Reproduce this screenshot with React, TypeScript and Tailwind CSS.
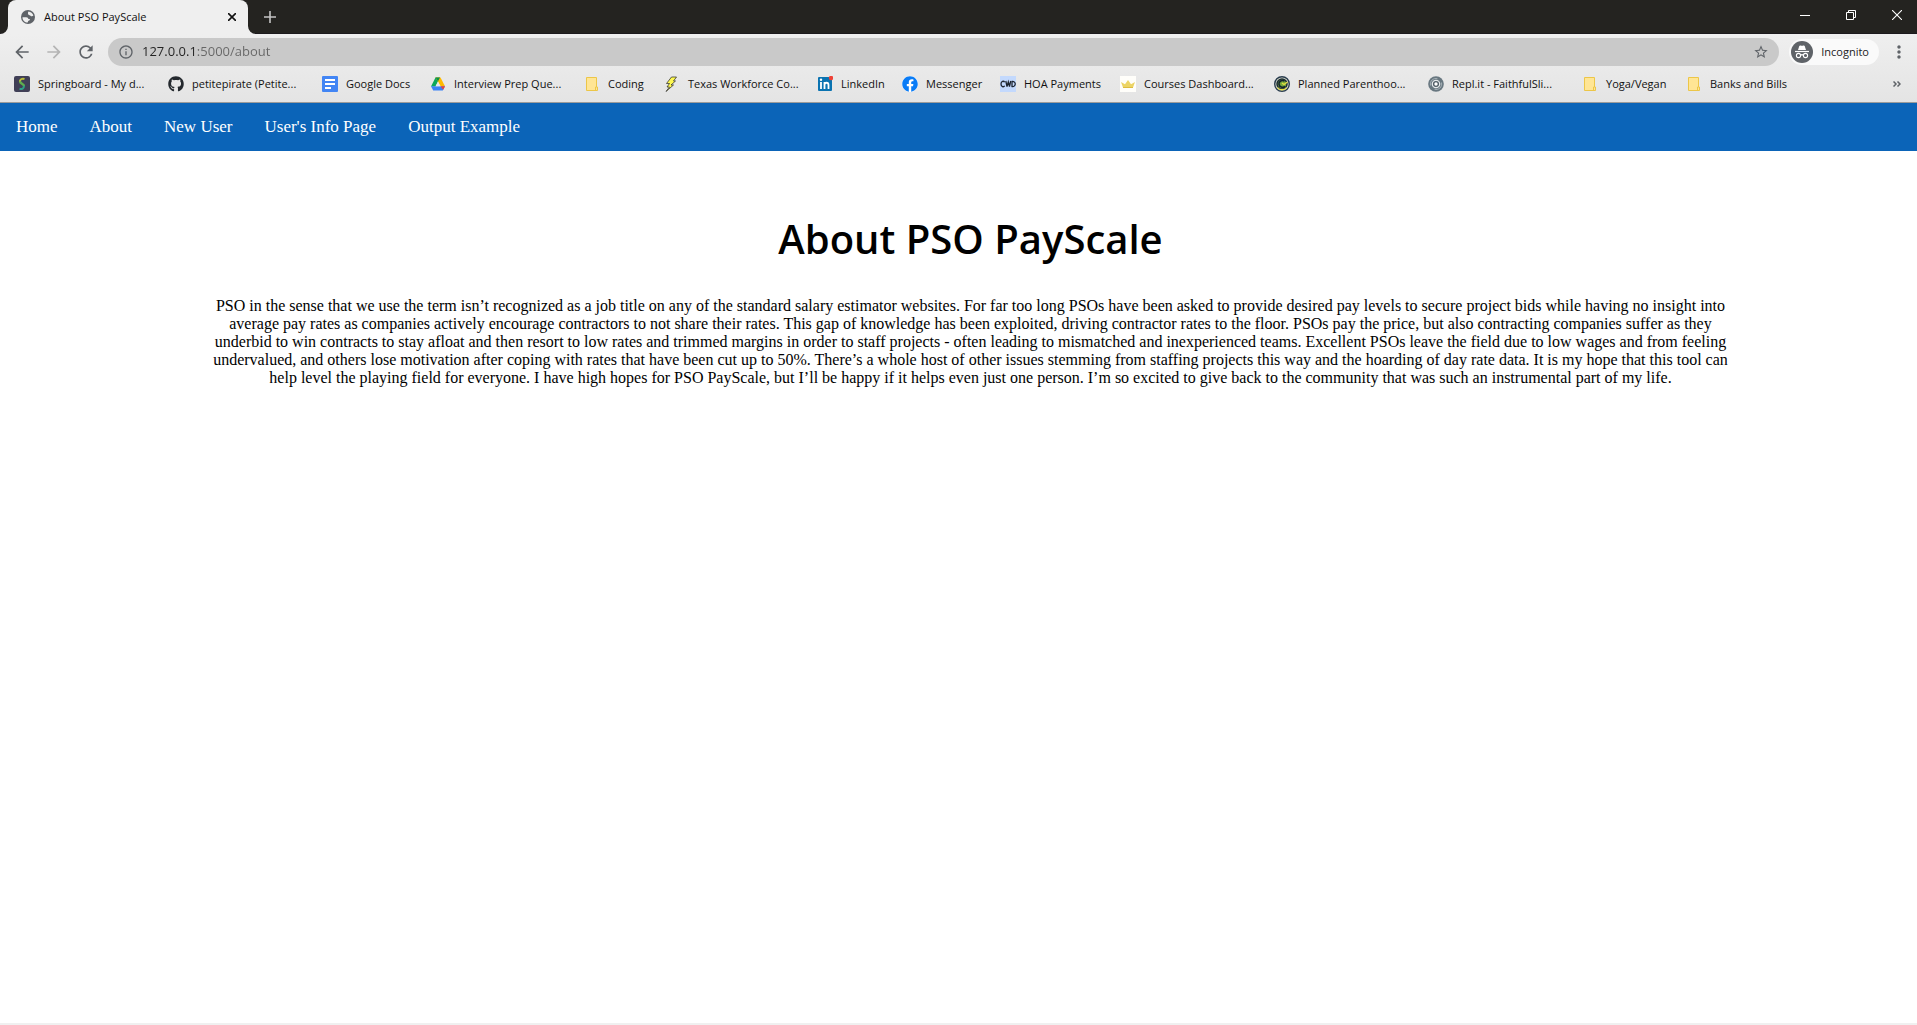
import type { ReactNode } from "react";
import { FaFacebook, FaGithub } from "react-icons/fa";
import {
  MdArrowBack,
  MdArrowForward,
  MdInfoOutline,
  MdMoreVert,
  MdRefresh,
  MdStarBorder,
} from "react-icons/md";

const GlobeIcon = () => (
  <svg viewBox="0 0 16 16" className="size-4">
    <circle cx="8" cy="8" r="7" fill="#5f6368" />
    <path d="M8.500 2.600c2.200.2 4.200 1.800 4.900 4-.8.900-2.200.9-2.900.1-.4-.5-1.300-.2-2-.9-.7-.8-.7-2.200 0-3.200z" fill="#efefef" />
    <path
      d="M2.500 8.200h3.800c1.300 0 2 .8 2 1.700h1.500c.3 1.200-.5 1.700-1.500 1.800l-.6 1.800C4.800 13.500 2.300 11.200 2.500 8.200z"
      fill="#efefef"
    />
  </svg>
);

const FolderIcon = () => (
  <svg viewBox="0 0 16 16" className="size-4">
    <path d="M2.500 1.500h10v9.500h1v3.500h-11z" fill="#ffe594" stroke="#ecc648" />
    <path d="M11.500 14.500v-3.500h1" fill="none" stroke="#ecc648" />
  </svg>
);

const SpringboardIcon = () => (
  <svg viewBox="0 0 16 16" className="size-4">
    <rect width="16" height="16" rx="2" fill="#403f56" />
    <path d="M10.500 3C8 2.200 5.500 3.500 6 6" fill="none" stroke="#b9bd3c" strokeWidth="2" />
    <path d="M6 5.500C6.300 8 10 7.500 10 10.200" fill="none" stroke="#5fae4e" strokeWidth="2.400" />
    <path d="M10 9.800C10 12.600 8 13.500 5.500 12.800" fill="none" stroke="#2f9f86" strokeWidth="2" />
  </svg>
);

const DocsIcon = () => (
  <svg viewBox="0 0 16 16" className="size-4">
    <rect width="16" height="16" rx="1" fill="#4285f4" />
    <path d="M3 4h10M3 8h10M3 12h6" stroke="#fff" strokeWidth="2" />
  </svg>
);

const DriveIcon = () => (
  <svg viewBox="0 0 16 16" className="size-4">
    <path d="M5.500 1.500h4.500L5.500 10.500H1z" fill="#0da75a" />
    <path d="M5.500 1.500h5l4.500 8.700h-4.500z" fill="#ffba00" />
    <path d="M5.500 1.500h4.500L8 5.500z" fill="#0a8f4c" />
    <path d="M1 10.200h14L12.800 14.500H3.200z" fill="#3b82f6" />
    <path d="M10.500 10.200h4.500l-1.800 3.500z" fill="#e8453c" />
    <path d="M8 5.500L10.500 10.200h-5z" fill="#e8e8e8" />
  </svg>
);

const BoltIcon = () => (
  <svg viewBox="0 0 16 16" className="size-4">
    <path
      d="M7.500 1L2.500 7.500h3L3 11h2.500L2 15.500 9.500 9H7l4.500-4H9.500L12.500 1z"
      fill="#fdf851"
      stroke="#222"
      strokeWidth="0.700"
    />
  </svg>
);

const LinkedInIcon = () => (
  <svg viewBox="0 0 16 16" className="size-4">
    <rect x="1" y="1" width="14" height="14" rx="1" fill="#0a73b1" />
    <path d="M4 6v7M7.500 6v7M7.500 13V9c0-3 4-3 4 0v4" fill="none" stroke="#fff" strokeWidth="1.800" />
    <circle cx="4" cy="3.800" r="1.200" fill="#fff" />
    <circle cx="14" cy="2" r="2.200" fill="#ee4237" />
  </svg>
);

const MessengerIcon = () => (
  <span className="flex size-4 items-center justify-center rounded-full bg-white">
    <FaFacebook className="size-4 text-[#0a7cf6]" />
  </span>
);

const CwdIcon = () => (
  <svg viewBox="0 0 16 16" className="size-4">
    <rect width="16" height="16" fill="#c3d9fd" />
    <g fill="none" stroke="#1d2430" strokeWidth="1.300">
      <path d="M4.600 6.300C3.800 4.600 1 5 1 8s2.800 3.400 3.600 1.700" />
      <path d="M5.800 5l1.200 5.500L8.300 6l1.200 4.500L10.700 5" />
      <path d="M12 5.500v5c4.300.5 4.300-5.500 0-5z" />
    </g>
  </svg>
);

const CrownIcon = () => (
  <svg viewBox="0 0 16 16" className="size-4">
    <rect width="16" height="16" fill="#fffefa" />
    <path d="M1 6l4 2.300L8 4 11 8.300 15 6l-2 5.500H3z" fill="#ecd465" />
    <path d="M3 11.500h10" stroke="#dcbc3f" />
  </svg>
);

const PlannedIcon = () => (
  <svg viewBox="0 0 16 16" className="size-4">
    <circle cx="8" cy="8" r="7.300" fill="#d9dccb" stroke="#2a3d4f" strokeWidth="1.400" />
    <circle cx="8" cy="8" r="5" fill="#76a83c" stroke="#1c2b36" strokeWidth="1.500" />
    <path d="M10.500 5C7 3.500 4.500 6 5 8.500s3.500 3.500 6 2" fill="none" stroke="#13232e" strokeWidth="1.600" />
    <path d="M8 7l2 1.500L13.500 6" fill="none" stroke="#e7df43" strokeWidth="1.400" />
    <path d="M3.500 11.500c2 3 7 3 9 0" fill="none" stroke="#e7df43" strokeWidth="1.300" />
  </svg>
);

const ReplIcon = () => (
  <svg viewBox="0 0 16 16" className="size-4">
    <circle cx="8" cy="8" r="7.800" fill="#687780" />
    <circle cx="8" cy="8" r="3.700" fill="#4f5d66" stroke="#e3e7e9" strokeWidth="1.300" />
    <circle cx="8" cy="8" r="1.700" fill="#fff" />
    <path
      d="M2.500 9.500C1.500 5 5.500 1.500 9.500 2.800M13.500 6.500C14.500 11 10.500 14.500 6.500 13.200"
      fill="none"
      stroke="#aeb8bd"
      strokeWidth="0.900"
    />
  </svg>
);

const IncognitoIcon = () => (
  <svg viewBox="0 0 22 22" className="size-[22px]">
    <circle cx="11" cy="11" r="11" fill="#5f6368" />
    <path d="M7 9L8.300 5c.2-.6.800-.7 1.400-.5.800.3 1.800.3 2.600 0 .6-.2 1.200-.1 1.400.5L15 9z" fill="#fff" />
    <path d="M4 10.500h14" stroke="#fff" strokeWidth="1.200" />
    <g fill="none" stroke="#fff" strokeWidth="1.100">
      <circle cx="7.500" cy="14.500" r="2.100" />
      <circle cx="14.500" cy="14.500" r="2.100" />
      <path d="M9.600 14.300c.8-.7 2-.7 2.800 0" />
    </g>
  </svg>
);

type Bookmark = { label: string; icon: ReactNode; width: string };

const bookmarks: Bookmark[] = [
  { label: "Springboard - My d...", icon: <SpringboardIcon />, width: "w-[154px]" },
  { label: "petitepirate (Petite...", icon: <FaGithub className="size-4 text-[#24292e]" />, width: "w-[154px]" },
  { label: "Google Docs", icon: <DocsIcon />, width: "w-[108px]" },
  { label: "Interview Prep Que...", icon: <DriveIcon />, width: "w-[154px]" },
  { label: "Coding", icon: <FolderIcon />, width: "w-20" },
  { label: "Texas Workforce Co...", icon: <BoltIcon />, width: "w-[153px]" },
  { label: "LinkedIn", icon: <LinkedInIcon />, width: "w-[85px]" },
  { label: "Messenger", icon: <MessengerIcon />, width: "w-[98px]" },
  { label: "HOA Payments", icon: <CwdIcon />, width: "w-[120px]" },
  { label: "Courses Dashboard...", icon: <CrownIcon />, width: "w-[154px]" },
  { label: "Planned Parenthoo...", icon: <PlannedIcon />, width: "w-[154px]" },
  { label: "Repl.it - FaithfulSli...", icon: <ReplIcon />, width: "w-[154px]" },
  { label: "Yoga/Vegan", icon: <FolderIcon />, width: "w-[104px]" },
  { label: "Banks and Bills", icon: <FolderIcon />, width: "w-[104px]" },
];

const links = ["Home", "About", "New User", "User's Info Page", "Output Example"];

const TabStrip = () => (
  <div className="flex h-[34px] items-end border-b border-[#1c1a1d] bg-[#242320] pl-2">
    <div className="relative -mb-px flex h-[34px] w-60 items-center rounded-t-lg bg-[#efefef] pr-3 pl-3">
      <svg viewBox="0 0 8 8" className="absolute bottom-0 -left-2 size-2">
        <path d="M8 0v8H0a8 8 0 0 0 8-8z" fill="#efefef" />
      </svg>
      <svg viewBox="0 0 8 8" className="absolute -right-2 bottom-0 size-2">
        <path d="M0 0v8h8a8 8 0 0 1-8-8z" fill="#efefef" />
      </svg>
      <GlobeIcon />
      <span className="ml-2 flex-1 text-[11px] whitespace-nowrap text-[#111]">About PSO PayScale</span>
      <button type="button" aria-label="Close tab">
        <svg viewBox="0 0 8 8" className="size-2" stroke="#111" strokeWidth="1.600">
          <path d="M0 0l8 8M8 0L0 8" />
        </svg>
      </button>
    </div>
    <button type="button" aria-label="New tab" className="ml-4 self-center">
      <svg viewBox="0 0 12 12" className="size-3" stroke="#c4c4c4" strokeWidth="1.600">
        <path d="M6 0v12M0 6h12" />
      </svg>
    </button>
    <div className="mr-[15px] ml-auto flex items-center gap-9 self-center pb-1">
      <button type="button" aria-label="Minimize">
        <svg viewBox="0 0 10 10" className="size-[10px]" stroke="#fff">
          <path d="M0 5.500h10" />
        </svg>
      </button>
      <button type="button" aria-label="Restore">
        <svg viewBox="0 0 10 10" className="size-[10px]" fill="none" stroke="#fff">
          <path d="M.5 2.500h7v7h-7zM2.500 2.500v-2h7v7h-2" />
        </svg>
      </button>
      <button type="button" aria-label="Close">
        <svg viewBox="0 0 10 10" className="size-[10px]" stroke="#fff" strokeWidth="1.100">
          <path d="M0 0l10 10M10 0L0 10" />
        </svg>
      </button>
    </div>
  </div>
);

const Toolbar = () => (
  <div className="flex h-9 items-center pr-2 pl-3 text-[#5f6368]">
    <button type="button" aria-label="Back">
      <MdArrowBack className="size-5" />
    </button>
    <button type="button" aria-label="Forward" className="ml-3 text-[#b4b4b4]">
      <MdArrowForward className="size-5" />
    </button>
    <button type="button" aria-label="Reload" className="ml-3">
      <MdRefresh className="size-5" />
    </button>
    <div className="ml-3 flex h-7 flex-1 items-center rounded-full bg-[#c9c9c9] px-[10px]">
      <MdInfoOutline className="size-4" />
      <input
        type="text"
        aria-label="Address"
        defaultValue="127.0.0.1:5000/about"
        className="ml-2 flex-1 bg-linear-to-r from-[#222] from-[54px] to-[#666] to-[54px] bg-clip-text text-[13px] text-transparent outline-none"
      />
      <button type="button" aria-label="Bookmark this page">
        <MdStarBorder className="size-4" />
      </button>
    </div>
    <button
      type="button"
      className="ml-[10px] flex h-[26px] items-center rounded-full bg-[#fafafa] pr-[10px] pl-[2px] text-[11px] text-[#222]"
    >
      <IncognitoIcon />
      <span className="ml-2">Incognito</span>
    </button>
    <button type="button" aria-label="Menu" className="ml-[10px]">
      <MdMoreVert className="size-5" />
    </button>
  </div>
);

const BookmarksBar = () => (
  <div className="flex h-[33px] items-center border-b border-[#9b9b9b] pr-4 pb-[4px] pl-[14px] text-[11px] text-[#111]">
    {bookmarks.map((bookmark) => (
      <a key={bookmark.label} href="#" className={`flex shrink-0 items-center gap-2 ${bookmark.width}`}>
        {bookmark.icon}
        <span className="whitespace-nowrap">{bookmark.label}</span>
      </a>
    ))}
    <button type="button" aria-label="More bookmarks" className="ml-auto">
      <svg viewBox="0 0 8 6" className="h-[6px] w-2" fill="none" stroke="#5f6368" strokeWidth="1.500">
        <path d="M.5.5L3 3 .5 5.500M4.500.5L7 3 4.500 5.500" />
      </svg>
    </button>
  </div>
);

const App = () => {
  return (
    <div className="flex min-h-screen flex-col border-b-2 border-[#f0f0f0] bg-white">
      <header className="font-['Open_Sans',sans-serif]">
        <TabStrip />
        <div className="bg-linear-to-b from-[#efefef] to-[#e4e4e4]">
          <Toolbar />
          <BookmarksBar />
        </div>
      </header>

      <nav className="flex h-12 items-center gap-8 bg-[#0b64b8] px-4 font-['Liberation_Serif',serif] text-[17px] text-white">
        {links.map((link) => (
          <a key={link} href="#">
            {link}
          </a>
        ))}
      </nav>

      <main className="flex-1 pt-15 pl-6 text-center text-black">
        <div className="mx-auto w-[81%]">
          <h1 className="font-['Comic_Sans_MS','Open_Sans',sans-serif] text-[40px] leading-[56px] font-semibold">
            About PSO PayScale
          </h1>
          <p className="mt-[30px] font-['Liberation_Serif',serif] text-base leading-[18px]">
            PSO in the sense that we use the term isn’t recognized as a job title on any of the standard salary
            estimator websites. For far too long PSOs have been asked to provide desired pay levels to secure project
            bids while having no insight into average pay rates as companies actively encourage contractors to not
            share their rates. This gap of knowledge has been exploited, driving contractor rates to the floor. PSOs
            pay the price, but also contracting companies suffer as they underbid to win contracts to stay afloat and
            then resort to low rates and trimmed margins in order to staff projects - often leading to mismatched and
            inexperienced teams. Excellent PSOs leave the field due to low wages and from feeling undervalued, and
            others lose motivation after coping with rates that have been cut up to 50%. There’s a whole host of other
            issues stemming from staffing projects this way and the hoarding of day rate data. It is my hope that this
            tool can help level the playing field for everyone. I have high hopes for PSO PayScale, but I’ll be happy
            if it helps even just one person. I’m so excited to give back to the community that was such an
            instrumental part of my life.
          </p>
        </div>
      </main>
    </div>
  );
};

export default App;
